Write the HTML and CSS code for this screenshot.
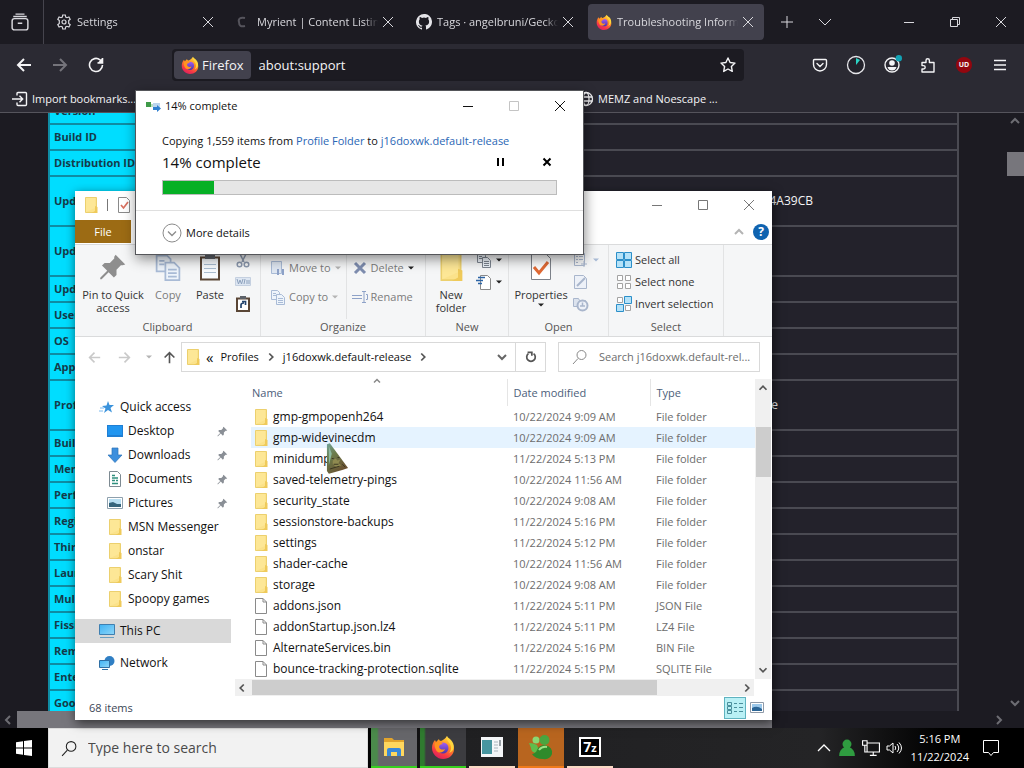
FILE: index.html
```html
<!DOCTYPE html>
<html lang="en">
<head>
    <meta charset="UTF-8">
    <meta name="viewport" content="width=device-width, initial-scale=1.0">
    <title>Troubleshooting Information</title>
    <link rel="stylesheet" href="styles.css">
</head>
<body>
    <!-- shared icons -->
    <svg class="sprite" aria-hidden="true">
        <defs>
            <linearGradient id="foxFire" x1="0.8" y1="0" x2="0.3" y2="1">
                <stop offset="0" stop-color="#ffe24a"/>
                <stop offset="0.4" stop-color="#ff9320"/>
                <stop offset="0.75" stop-color="#f83a45"/>
                <stop offset="1" stop-color="#d8205f"/>
            </linearGradient>
            <linearGradient id="foxGlobe" x1="0" y1="0" x2="0" y2="1">
                <stop offset="0" stop-color="#a05cf5"/>
                <stop offset="1" stop-color="#4b36a8"/>
            </linearGradient>
            <linearGradient id="screenBlue" x1="0" y1="0" x2="1" y2="1">
                <stop offset="0" stop-color="#3fb2f3"/>
                <stop offset="1" stop-color="#8fd6f8"/>
            </linearGradient>
            <linearGradient id="cursorFur" x1="0" y1="0" x2="0.6" y2="1">
                <stop offset="0" stop-color="#6fa39a"/>
                <stop offset="0.4" stop-color="#6b7c4a"/>
                <stop offset="1" stop-color="#6a4f30"/>
            </linearGradient>
        </defs>
        <symbol id="i-folder" viewBox="0 0 16 16">
            <path d="M2.500 .5h11v15h-11z" fill="#fbe28a" stroke="#ecd06e"/>
            <path d="M3 1h9v10l-9 4z" fill="#fde796"/>
            <path d="M12 9l2.500 1v6h-6l3.500-2z" fill="#efca5a"/>
        </symbol>
        <symbol id="i-file" viewBox="0 0 16 16">
            <path d="M2.500 .5h7.500l3.500 3.500v11.500h-11z" fill="#fff" stroke="#8a8a8a"/>
            <path d="M10 .5v3.500h3.500" fill="none" stroke="#8a8a8a"/>
        </symbol>
        <symbol id="i-pin" viewBox="0 0 16 16">
            <path d="M9.500 1l5.500 5.500-1.500 .5-1 0-2.500 2.500v3l-1.500 1.500-3-3-4 4-.8 0 0-.8 4-4-3-3 1.500-1.500h3l2.500-2.500v-1z" fill="currentColor"/>
        </symbol>
        <symbol id="i-x" viewBox="0 0 16 16">
            <path d="M3 3l10 10M13 3l-10 10" fill="none" stroke="currentColor"/>
        </symbol>
        <symbol id="i-min" viewBox="0 0 16 16">
            <path d="M3 8.500h10" fill="none" stroke="currentColor"/>
        </symbol>
        <symbol id="i-max" viewBox="0 0 16 16">
            <path d="M3.500 3.500h9v9h-9z" fill="none" stroke="currentColor"/>
        </symbol>
        <symbol id="i-down" viewBox="0 0 16 16">
            <path d="M4 6l4 4 4-4" fill="none" stroke="currentColor" stroke-width="2"/>
        </symbol>
        <symbol id="i-up" viewBox="0 0 16 16">
            <path d="M4 10l4-4 4 4" fill="none" stroke="currentColor" stroke-width="2"/>
        </symbol>
        <symbol id="i-left" viewBox="0 0 16 16">
            <path d="M10 4l-4 4 4 4" fill="none" stroke="currentColor" stroke-width="2"/>
        </symbol>
        <symbol id="i-right" viewBox="0 0 16 16">
            <path d="M6 4l4 4-4 4" fill="none" stroke="currentColor" stroke-width="2"/>
        </symbol>
        <symbol id="i-caret" viewBox="0 0 8 8">
            <path d="M1 2.500h6l-3 3z" fill="currentColor"/>
        </symbol>
        <symbol id="i-arrow" viewBox="0 0 16 16">
            <path d="M15 8h-13M8 2l-6 6 6 6" fill="none" stroke="currentColor" stroke-width="2"/>
        </symbol>
        <symbol id="i-search" viewBox="0 0 16 16">
            <circle cx="9.500" cy="6" r="4.500" fill="none" stroke="currentColor"/>
            <path d="M6 9.500l-5 5.500" fill="none" stroke="currentColor"/>
        </symbol>
        <symbol id="i-firefox" viewBox="0 0 24 24">
            <path d="M16 1c0 3 2 4 4 6 2 2 3 4 3 7 0 6-5 10-11 10S1 19 1 13c0-3 1-6 3-8l1 2c1-1 2-2 3-3 0 1 1 2 2 2 2-1 4-2 6-5z" fill="url(#foxFire)"/>
            <circle cx="12" cy="13" r="5.500" fill="url(#foxGlobe)"/>
            <path d="M4 8c3-2 6-1 8 1-2 0-4 1-4 3 1 3 4 3 6 2-1 4-7 5-9 1-1-2-2-5-1-7z" fill="#ff9420"/>
            <path d="M16 1c-1 3 1 5 3 8 2 3 1 7-1 9 6-2 6-9 2-13-2-2-3-2-4-4z" fill="#ffd53e"/>
        </symbol>
        <symbol id="i-globe" viewBox="0 0 16 16">
            <circle cx="8" cy="8" r="6.500" fill="none" stroke="currentColor" stroke-width="1.300"/>
            <ellipse cx="8" cy="8" rx="3" ry="6.500" fill="none" stroke="currentColor" stroke-width="1.300"/>
            <path d="M1.500 6h13M1.500 10h13" fill="none" stroke="currentColor" stroke-width="1.300"/>
        </symbol>
        <symbol id="i-checkdoc" viewBox="0 0 16 16">
            <path d="M2.500 .5h8l3 3v12h-11z" fill="#fff" stroke="#8a8a8a"/>
            <path d="M5 8l2.500 3 4.500-6" fill="none" stroke="#d9705f" stroke-width="1.700"/>
        </symbol>
        <symbol id="i-page" viewBox="0 0 16 16">
            <path d="M1.500 1.500h6l2 2v7h-8z" fill="#eef4fb" stroke="currentColor"/>
            <path d="M3 4.500h3M3 6.500h3" stroke="currentColor"/>
            <path d="M6.500 5.500h5l3 3v7h-8z" fill="#eef4fb" stroke="currentColor"/>
            <path d="M8 9.500h5M8 11.500h5M8 13.500h5" stroke="currentColor"/>
        </symbol>
    </svg>

    <div class="desktop">
        <main class="browser">
            <div class="tab-bar">
                <button class="tab-list" aria-label="Recent browsing">
                    <svg viewBox="0 0 16 16" width="18" height="18" fill="none" stroke="currentColor" stroke-width="1.300">
                        <rect x="1" y="5" width="14" height="10" rx="2"/>
                        <path d="M2 3.200h12M4 1h8M6 9.200h4"/>
                    </svg>
                </button>
                <div class="tab">
                    <svg class="ic" viewBox="0 0 16 16" fill="none" stroke="currentColor" stroke-width="1.200">
                        <path d="M6.700 1h2.600l.4 2 1.300 .7 1.900-.7 1.300 2.300-1.500 1.300v2.800l1.500 1.300-1.300 2.300-1.900-.7-1.300 .7-.4 2h-2.600l-.4-2-1.300-.7-1.900 .7-1.300-2.300 1.500-1.300v-2.800l-1.500-1.300 1.300-2.300 1.900 .7 1.300-.7z"/>
                        <circle cx="8" cy="8" r="2"/>
                    </svg>
                    <span class="tab-title">Settings</span>
                    <button class="tab-close" aria-label="Close tab"><svg class="ic"><use href="#i-x"/></svg></button>
                </div>
                <div class="tab">
                    <svg class="ic dim" viewBox="0 0 16 16" fill="none" stroke="currentColor" stroke-width="2">
                        <path d="M9 4c-5-1-7 1-6 4 0 4 2 5 6 4"/>
                    </svg>
                    <span class="tab-title">Myrient | Content Listing</span>
                    <button class="tab-close" aria-label="Close tab"><svg class="ic"><use href="#i-x"/></svg></button>
                </div>
                <div class="tab">
                    <svg class="ic" viewBox="0 0 16 16" fill="#e4e4e8">
                        <path d="M8 0a8 8 0 0 0-2.500 15.600c.4 0 .5-.2 .5-.4v-1.500c-2.200 .5-2.700-1-2.700-1-.4-.9-.9-1.200-.9-1.200-.7-.5 0-.5 0-.5 .8 0 1.200 .8 1.200 .8 .8 1.200 1.900 .9 2.400 .7 0-.5 .3-.9 .5-1.100-1.800-.2-3.600-.9-3.600-4 0-.9 .3-1.600 .8-2.100 0-.3-.4-1.100 .1-2.200 0 0 .7-.2 2.200 .8a7.500 7.500 0 0 1 4 0c1.500-1 2.200-.8 2.200-.8 .5 1.100 .1 1.900 .1 2.200 .5 .5 .8 1.200 .8 2.100 0 3.100-1.900 3.700-3.700 3.900 .3 .3 .6 .8 .6 1.500v2.300c0 .2 .1 .5 .5 .4a8 8 0 0 0-2.500-15.600z"/>
                    </svg>
                    <span class="tab-title">Tags · angelbruni/Gecko</span>
                    <button class="tab-close" aria-label="Close tab"><svg class="ic"><use href="#i-x"/></svg></button>
                </div>
                <div class="tab active">
                    <svg class="ic"><use href="#i-firefox"/></svg>
                    <span class="tab-title">Troubleshooting Information</span>
                    <button class="tab-close" aria-label="Close tab"><svg class="ic"><use href="#i-x"/></svg></button>
                </div>
                <button class="tab-tool" aria-label="New tab">
                    <svg class="ic" viewBox="0 0 16 16" stroke="currentColor"><path d="M8 2v12M2 8h12"/></svg>
                </button>
                <button class="tab-tool" aria-label="List all tabs">
                    <svg class="ic" viewBox="0 0 16 16" fill="none" stroke="currentColor"><path d="M2 5l6 6 6-6"/></svg>
                </button>
                <div class="window-buttons">
                    <button aria-label="Minimize"><svg class="ic"><use href="#i-min"/></svg></button>
                    <button aria-label="Restore">
                        <svg class="ic" viewBox="0 0 16 16" fill="none" stroke="currentColor"><path d="M3.500 5.500h7v7h-7zM5.500 5v-1.500h7v7h-1.500"/></svg>
                    </button>
                    <button aria-label="Close"><svg class="ic"><use href="#i-x"/></svg></button>
                </div>
            </div>

            <div class="nav-bar">
                <button aria-label="Back"><svg class="ic"><use href="#i-arrow"/></svg></button>
                <button class="disabled" aria-label="Forward"><svg class="ic flip"><use href="#i-arrow"/></svg></button>
                <button aria-label="Reload">
                    <svg class="ic" viewBox="0 0 16 16" fill="none" stroke="currentColor" stroke-width="1.600">
                        <path d="M14.500 8a6.500 6.500 0 1 1-2.500-5.200l2.500 2"/><path d="M14.500 1v5h-5" fill="currentColor"/>
                    </svg>
                </button>
                <div class="url-bar">
                    <span class="identity"><svg class="fox"><use href="#i-firefox"/></svg>Firefox</span>
                    <input type="text" aria-label="Address" value="about:support">
                    <button aria-label="Bookmark this page">
                        <svg class="ic" viewBox="0 0 16 16" fill="none" stroke="currentColor" stroke-width="1.400" stroke-linejoin="round">
                            <path d="M8 1l2.100 4.500 4.900 .6-3.600 3.400 .9 4.900-4.300-2.400-4.300 2.400 .9-4.900-3.600-3.400 4.900-.6z"/>
                        </svg>
                    </button>
                </div>
                <button aria-label="Save to Pocket">
                    <svg class="ic" viewBox="0 0 16 16" fill="none" stroke="currentColor" stroke-width="1.400" stroke-linecap="round">
                        <path d="M2.500 2.500h11q1 0 1 1v4a6.500 6.500 0 0 1-13 0v-4q0-1 1-1zM5 6.500l3 3 3-3"/>
                    </svg>
                </button>
                <button aria-label="Session timer">
                    <svg viewBox="0 0 20 20" width="20" height="20">
                        <circle cx="10" cy="10" r="8.500" fill="#23222b" stroke="#e6e6ea" stroke-width="1.300"/>
                        <path d="M10 10v-7l4 2z" fill="#2bd4c5"/>
                    </svg>
                </button>
                <button aria-label="Account">
                    <svg viewBox="0 0 20 20" width="20" height="20">
                        <circle cx="10" cy="10" r="7" fill="none" stroke="#f4f4f6" stroke-width="1.400"/>
                        <circle cx="10" cy="8" r="2.800" fill="#f4f4f6"/>
                        <path d="M5.500 12h9q-1 3.500-4.500 3.500t-4.500-3.500z" fill="#f4f4f6"/>
                        <circle cx="16.800" cy="3.200" r="3.200" fill="#12a3b5"/>
                    </svg>
                </button>
                <button aria-label="Extensions">
                    <svg class="ic" viewBox="0 0 16 16" fill="none" stroke="currentColor" stroke-width="1.400" stroke-linejoin="round">
                        <path d="M2 5.500h4v-2a1.700 1.700 0 0 1 3.400 0v2h4.600v9.500h-12v-3h1.500a1.700 1.700 0 0 0 0-3.400h-1.500z"/>
                    </svg>
                </button>
                <button aria-label="uBlock Origin"><span class="ublock">UD</span></button>
                <button aria-label="Menu">
                    <svg class="ic" viewBox="0 0 16 16" stroke="currentColor" stroke-width="1.500"><path d="M2 3.500h12M2 8h12M2 12.500h12"/></svg>
                </button>
            </div>

            <div class="bookmarks">
                <a href="#" class="import">
                    <svg class="ic" viewBox="0 0 16 16" fill="none" stroke="currentColor" stroke-width="1.400">
                        <path d="M5 4.500v-2q0-1 1-1h7.500q1 0 1 1v11q0 1-1 1h-7.500q-1 0-1-1v-2M0 8h10.500M7.500 4.800l3.200 3.200-3.200 3.200"/>
                    </svg>Import bookmarks...
                </a>
                <a href="#"><svg class="ic"><use href="#i-globe"/></svg>MEMZ and Noescape ...</a>
            </div>

            <div class="viewport">
                <div class="page">
                    <table class="support">
                        <tr><th>Version</th><td></td></tr>
                        <tr><th>Build ID</th><td></td></tr>
                        <tr><th>Distribution ID</th><td></td></tr>
                        <tr class="tall"><th>Update Folder</th><td class="folder-value">C:\ProgramData\Mozilla\updates\308046B0AF4A39CB</td></tr>
                        <tr class="tall"><th>Update History</th><td></td></tr>
                        <tr><th>Update Channel</th><td></td></tr>
                        <tr><th>User Agent</th><td></td></tr>
                        <tr><th>OS</th><td></td></tr>
                        <tr><th>Application Binary</th><td></td></tr>
                        <tr class="tall"><th>Profile Folder</th><td class="profile-value">Profiles\j16doxwk.default-release</td></tr>
                        <tr><th>Build Configuration</th><td></td></tr>
                        <tr><th>Memory Use</th><td></td></tr>
                        <tr><th>Performance</th><td></td></tr>
                        <tr><th>Registered Service Workers</th><td></td></tr>
                        <tr><th>Third-party Modules</th><td></td></tr>
                        <tr><th>Launcher Process</th><td></td></tr>
                        <tr><th>Multiprocess Windows</th><td></td></tr>
                        <tr><th>Fission Windows</th><td></td></tr>
                        <tr><th>Remote Processes</th><td></td></tr>
                        <tr><th>Enterprise Policies</th><td></td></tr>
                        <tr><th>Google Location Service Key</th><td></td></tr>
                    </table>
                </div>
                <div class="page-vscroll">
                    <svg class="ic"><use href="#i-up"/></svg>
                    <div class="thumb"></div>
                    <svg class="ic"><use href="#i-down"/></svg>
                </div>
            </div>
            <div class="page-hscroll">
                <svg class="ic"><use href="#i-left"/></svg>
                <div class="thumb"></div>
                <svg class="ic"><use href="#i-right"/></svg>
            </div>
        </main>

        <footer class="taskbar">
            <button class="start" aria-label="Start">
                <svg viewBox="0 0 16 16" width="16" height="16" fill="#fff"><path d="M0 2.200l7-1v6.300h-7zM8 1.100l8-1.100v7.500h-8zM0 8.500h7v6.300l-7-1zM8 8.500h8v7.500l-8-1.100z"/></svg>
            </button>
            <label class="task-search">
                <svg viewBox="0 0 16 16" width="17" height="17"><use href="#i-search"/></svg>
                <input type="text" aria-label="Search" placeholder="Type here to search">
            </label>
            <div class="apps">
                <button class="app explorer-app" aria-label="File Explorer">
                    <svg viewBox="0 0 24 24" width="24" height="24">
                        <path d="M2 3h8l2 2h10v4h-20z" fill="#e2a42c"/>
                        <path d="M2 7h20v14h-20z" fill="#ffd75e"/>
                        <path d="M5 21v-6q0-2 2-2h10q2 0 2 2v6h-4v-4h-6v4z" fill="#3a88d8"/>
                    </svg>
                </button>
                <button class="app firefox-app" aria-label="Firefox"><svg width="24" height="24"><use href="#i-firefox"/></svg></button>
                <button class="app window-app" aria-label="Application">
                    <svg viewBox="0 0 24 22" width="24" height="22">
                        <rect x="1" y="1" width="22" height="20" fill="#f4f6f8"/>
                        <rect x="2" y="4" width="10" height="14" fill="#4796a0"/>
                        <path d="M14 6h4M14 9h4M14 12h4M14 15h4" stroke="#a9b4bc"/>
                        <path d="M20 4v6" stroke="#3c4852"/>
                    </svg>
                </button>
                <button class="app msn-app" aria-label="Messenger">
                    <svg viewBox="0 0 26 26" width="26" height="26">
                        <circle cx="8" cy="6" r="3.500" fill="#8ad873"/>
                        <path d="M1 9q5 0 8 2l3 8q-9 1-9-5z" fill="#5fbd4c"/>
                        <circle cx="16.500" cy="6" r="5" fill="#4aa53f"/>
                        <path d="M4 20q4-1 5-4 2-5 8-5 8 2 7 9-2 6-9 5-8 0-11-5z" fill="#2f8a2b"/>
                        <path d="M11 16q3-4 8-3" fill="none" stroke="#9be284" stroke-width="2"/>
                    </svg>
                </button>
                <button class="app zip-app" aria-label="7-Zip"><span class="seven-zip">7<small>z</small></span></button>
            </div>
            <div class="tray">
                <svg viewBox="0 0 16 16" width="16" height="16" fill="none" stroke="#fff" stroke-width="1.300"><path d="M2 11l6-6 6 6"/></svg>
                <svg viewBox="0 0 16 16" width="18" height="18" fill="#2f9c40"><circle cx="8" cy="4.500" r="4"/><path d="M6 7h4q5 2 5 8h-14q0-6 5-8z"/></svg>
                <svg viewBox="0 0 16 16" width="18" height="18" fill="none" stroke="#fff"><path d="M4.500 3.500h11v8h-11zM7 14.500h6M10 12v2M.5 1.500h4v4h-4zM2.500 5.500v6h2"/></svg>
                <svg viewBox="0 0 16 16" width="16" height="16" fill="none" stroke="#fff"><path d="M1 6h2.500l3.500-3v10l-3.500-3h-2.500zM9 6q1.500 2 0 4M11 4q3.500 4 0 8M13 2.500q5 5.500 0 11"/></svg>
                <div class="clock"><span>5:16 PM</span><span>11/22/2024</span></div>
                <button class="notify" aria-label="Notifications">
                    <svg viewBox="0 0 18 18" width="18" height="18" fill="none" stroke="#fff"><path d="M1.500 1.500h15v12h-5l-2.500 3-2.500-3h-5z"/></svg>
                </button>
            </div>
        </footer>

        <section class="window explorer">
            <div class="ex-title">
                <svg class="ic"><use href="#i-folder"/></svg>
                <span class="bar"></span>
                <svg class="ic"><use href="#i-checkdoc"/></svg>
                <div class="window-buttons">
                    <button aria-label="Minimize"><svg class="ic"><use href="#i-min"/></svg></button>
                    <button aria-label="Maximize"><svg class="ic"><use href="#i-max"/></svg></button>
                    <button aria-label="Close"><svg class="ic"><use href="#i-x"/></svg></button>
                </div>
            </div>
            <div class="ex-tabs">
                <button class="file-tab">File</button>
                <svg class="ic collapse"><use href="#i-up"/></svg>
                <button class="help" aria-label="Help">?</button>
            </div>

            <div class="ribbon">
                <div class="group clipboard">
                    <div class="tools">
                        <button class="big pin-button"><svg class="big-ic grey"><use href="#i-pin"/></svg>Pin to Quick access</button>
                        <button class="big muted"><svg class="big-ic pale"><use href="#i-page"/></svg>Copy</button>
                        <button class="big">
                            <svg class="big-ic" viewBox="0 0 28 28">
                                <path d="M5 4.500h18v22h-18z" fill="#f7fafd" stroke="#5a4636" stroke-width="2"/>
                                <path d="M9 1h10v5h-10z" fill="#5c6168"/>
                                <path d="M8 11.500h12M8 15.500h12M8 19.500h12" stroke="#a9bccf"/>
                            </svg>Paste
                        </button>
                        <div class="stack">
                            <button aria-label="Cut">
                                <svg class="ic" viewBox="0 0 16 16" fill="none" stroke="#8b98ad" stroke-width="1.500"><path d="M4 0l5 10M12 0l-5 10"/><circle cx="4.500" cy="12.500" r="2.300"/><circle cx="11.500" cy="12.500" r="2.300"/></svg>
                            </button>
                            <button aria-label="Copy path">
                                <svg class="ic" viewBox="0 0 16 16" fill="none" stroke="#8ea2bd"><path d="M.5 3.500h15v8h-15z" fill="#dde6f2" stroke="#c5d0e0"/><path d="M2 5l1.500 5 1.500-4 1.500 4 1.500-5M10 5l-1 5M12 6v4M14 6v4"/></svg>
                            </button>
                            <button aria-label="Paste shortcut">
                                <svg class="ic" viewBox="0 0 16 16"><path d="M2 2.500h12v12.500h-12z" fill="#fff" stroke="#5a4636" stroke-width="2"/><path d="M5 0h6v3h-6z" fill="#5c6168"/><path d="M6 12v-3q0-2 3-2M7 5.500h3.500v3.500" fill="none" stroke="#24456f" stroke-width="1.700"/></svg>
                            </button>
                        </div>
                    </div>
                    <div class="group-name">Clipboard</div>
                </div>
                <div class="group organize">
                    <div class="tools">
                        <div class="stack muted">
                            <button>
                                <svg class="ic pale" viewBox="0 0 16 16"><path d="M1.500 1.500h10v12h-10z" fill="#dfe7f2" stroke="currentColor"/><path d="M7 9v6h2v-6zM12 9v6h2v-6z" fill="#8ea2c8"/></svg>
                                Move to<svg class="caret"><use href="#i-caret"/></svg>
                            </button>
                            <button><svg class="ic pale"><use href="#i-page"/></svg>Copy to<svg class="caret"><use href="#i-caret"/></svg></button>
                        </div>
                        <div class="stack muted divided">
                            <button>
                                <svg class="ic" viewBox="0 0 16 16" stroke="#7e8daf" stroke-width="3"><path d="M3 3l10 10M13 3l-10 10"/></svg>
                                Delete<svg class="caret dark"><use href="#i-caret"/></svg>
                            </button>
                            <button>
                                <svg class="ic" viewBox="0 0 16 16" fill="none" stroke="#8ea2c8"><path d="M0 6.500h10M0 9.500h10M10 2.500h4M10 13.500h4M12 2.500v11M14 5.500h1.500v5h-1.500"/></svg>
                                Rename
                            </button>
                        </div>
                    </div>
                    <div class="group-name">Organize</div>
                </div>
                <div class="group new">
                    <div class="tools">
                        <button class="big"><svg class="big-ic"><use href="#i-folder"/></svg>New folder</button>
                        <div class="stack">
                            <button aria-label="New item"><svg class="ic slate"><use href="#i-page"/></svg><svg class="caret dark"><use href="#i-caret"/></svg></button>
                            <button aria-label="Easy access">
                                <svg class="ic" viewBox="0 0 16 16" fill="none"><path d="M4.500 1.500h7l3 3v11h-10z" fill="#fff" stroke="#8a8a8a"/><path d="M2 3.500h7M0 6.500h7M2 9.500h4" stroke="#2c64a5" stroke-width="1.500"/></svg><svg class="caret dark"><use href="#i-caret"/></svg>
                            </button>
                        </div>
                    </div>
                    <div class="group-name">New</div>
                </div>
                <div class="group open">
                    <div class="tools">
                        <button class="big">
                            <svg class="big-ic" viewBox="0 0 28 28"><path d="M4.500 1.500h15l4 4v21h-19z" fill="#fff" stroke="#7d828a"/><path d="M7 14l5 6 9-11" fill="none" stroke="#e06a35" stroke-width="3"/></svg>
                            Properties<svg class="caret dark"><use href="#i-caret"/></svg>
                        </button>
                        <div class="stack">
                            <button aria-label="Open">
                                <svg class="ic" viewBox="0 0 16 16" fill="none" stroke="#a9b6cc"><path d="M1.500 1.500h10v12h-10zM3 4.500h2M6 4.500h4M3 7.500h2M6 7.500h4M3 10.500h2M8 12h6M11 9v6"/></svg><svg class="caret pale"><use href="#i-caret"/></svg>
                            </button>
                            <button aria-label="Edit">
                                <svg class="ic" viewBox="0 0 16 16" fill="none" stroke="#a9b6cc"><path d="M1.500 1.500h9l3 3v10h-12z" fill="#edf1f8"/><path d="M4 12l8-8" stroke-width="2"/></svg>
                            </button>
                            <button aria-label="History">
                                <svg class="ic" viewBox="0 0 16 16" fill="none" stroke="#a9b6cc"><path d="M.5 2.500h5l1 2h6v6h-12z" fill="#dce3ee"/><circle cx="9.500" cy="9.500" r="5" stroke-width="2" fill="#edf1f8"/><path d="M7 10h5M9.500 6.500v3" stroke-width="1.500"/></svg>
                            </button>
                        </div>
                    </div>
                    <div class="group-name">Open</div>
                </div>
                <div class="group select">
                    <div class="tools">
                        <div class="stack">
                            <button>
                                <svg class="ic" viewBox="0 0 16 16" fill="#b5e2f8" stroke="#2b8fc9"><path d="M.5 .5h7v7h-7zM8.500 .5h7v7h-7zM.5 8.500h7v7h-7zM8.500 8.500h7v7h-7z"/></svg>
                                Select all
                            </button>
                            <button>
                                <svg class="ic" viewBox="0 0 16 16" fill="#fff" stroke="#a3a3a3"><path d="M1.500 1.500h5v5h-5zM9.500 1.500h5v5h-5zM1.500 9.500h5v5h-5zM9.500 9.500h5v5h-5z"/></svg>
                                Select none
                            </button>
                            <button>
                                <svg class="ic" viewBox="0 0 16 16"><path d="M1.500 1.500h5v5h-5zM9.500 9.500h5v5h-5z" fill="#fff" stroke="#a3a3a3"/><path d="M8.500 .5h7v7h-7zM.5 8.500h7v7h-7z" fill="#b5e2f8" stroke="#2b8fc9"/></svg>
                                Invert selection
                            </button>
                        </div>
                    </div>
                    <div class="group-name">Select</div>
                </div>
            </div>

            <div class="address-row">
                <button class="go faint" aria-label="Back"><svg class="arrow"><use href="#i-arrow"/></svg></button>
                <button class="go faint" aria-label="Forward"><svg class="arrow flip"><use href="#i-arrow"/></svg></button>
                <button class="go narrow faint" aria-label="Recent locations"><svg class="caret"><use href="#i-caret"/></svg></button>
                <button class="go narrow" aria-label="Up"><svg class="arrow turn"><use href="#i-arrow"/></svg></button>
                <div class="path">
                    <svg class="ic"><use href="#i-folder"/></svg>
                    <span class="chevrons">«</span>
                    <span>Profiles</span>
                    <svg class="step"><use href="#i-right"/></svg>
                    <span>j16doxwk.default-release</span>
                    <svg class="step"><use href="#i-right"/></svg>
                    <svg class="ic open-list"><use href="#i-down"/></svg>
                    <button class="refresh" aria-label="Refresh">
                        <svg viewBox="0 0 14 14" width="12" height="12" fill="none" stroke="#555" stroke-width="2"><path d="M4 3a5 5 0 1 0 6 0M3 1.500h5v4"/></svg>
                    </button>
                </div>
                <label class="ex-search">
                    <svg class="ic"><use href="#i-search"/></svg>
                    <input type="text" aria-label="Search folder" placeholder="Search j16doxwk.default-rel...">
                </label>
            </div>

            <div class="ex-body">
                <nav class="sidebar">
                    <a href="#" class="top">
                        <svg class="ic" viewBox="0 0 16 16"><path d="M9 2l1.500 4 4.500 0-3.500 3 1.500 4.500-4-2.500-4 3 1.500-4.500-3.500-2.500 4.500-.5z" fill="#3b93dc"/><path d="M1 9h4M0 12h4" stroke="#7dbaf0"/></svg>
                        Quick access
                    </a>
                    <a href="#">
                        <svg class="ic" viewBox="0 0 16 16"><rect y="2" width="16" height="12" fill="#1f7fd4"/><rect x="1" y="3" width="14" height="9" fill="#2196f0"/></svg>
                        Desktop<svg class="pinned"><use href="#i-pin"/></svg>
                    </a>
                    <a href="#">
                        <svg class="ic" viewBox="0 0 16 16"><path d="M5 1h6v7h4l-7 7.500-7-7.500h4z" fill="#3d8fdd" stroke="#2b72b8" stroke-width=".7"/></svg>
                        Downloads<svg class="pinned"><use href="#i-pin"/></svg>
                    </a>
                    <a href="#">
                        <svg class="ic" viewBox="0 0 16 16"><path d="M2.500 .5h8l3 3v12h-11z" fill="#fff" stroke="#7d8a92"/><path d="M5 4.500h3M5 7h6M5 9.500h3M9 9.500h2M5 12.500h6" stroke="#2f8f7e" stroke-width="1.500"/></svg>
                        Documents<svg class="pinned"><use href="#i-pin"/></svg>
                    </a>
                    <a href="#">
                        <svg class="ic" viewBox="0 0 16 16"><path d="M.5 2.500h15v11h-15z" fill="#fff" stroke="#8ea0ad"/><path d="M2 4h12v8h-12z" fill="#b9dff2"/><path d="M2 8l4-1 4 2 4 0v3h-12z" fill="#37657c"/></svg>
                        Pictures<svg class="pinned"><use href="#i-pin"/></svg>
                    </a>
                    <a href="#"><svg class="ic"><use href="#i-folder"/></svg>MSN Messenger</a>
                    <a href="#"><svg class="ic"><use href="#i-folder"/></svg>onstar</a>
                    <a href="#"><svg class="ic"><use href="#i-folder"/></svg>Scary Shit</a>
                    <a href="#"><svg class="ic"><use href="#i-folder"/></svg>Spoopy games</a>
                    <a href="#" class="top spaced current">
                        <svg class="ic" viewBox="0 0 16 16"><path d="M.5 1.500h15v10h-15z" fill="url(#screenBlue)" stroke="#3f7fb0"/><path d="M1 14.500h14" stroke="#6c9fc0"/></svg>
                        This PC
                    </a>
                    <a href="#" class="top spaced">
                        <svg class="ic" viewBox="0 0 16 16"><circle cx="10.500" cy="6" r="5" fill="#2f7fc4"/><path d="M.5 5.500h10v7h-10z" fill="url(#screenBlue)" stroke="#2f6fa4"/><path d="M3 14.500h6" stroke="#2f6fa4"/></svg>
                        Network
                    </a>
                </nav>

                <div class="files">
                    <div class="files-row">
                        <table class="file-list">
                            <thead>
                                <tr>
                                    <th class="col-name">Name<svg class="sort"><use href="#i-up"/></svg></th>
                                    <th class="col-date">Date modified</th>
                                    <th class="col-type">Type</th>
                                </tr>
                            </thead>
                            <tbody>
                                <tr><td><svg class="ic"><use href="#i-folder"/></svg>gmp-gmpopenh264</td><td>10/22/2024 9:09 AM</td><td>File folder</td></tr>
                                <tr class="hovered"><td><svg class="ic"><use href="#i-folder"/></svg>gmp-widevinecdm</td><td>10/22/2024 9:09 AM</td><td>File folder</td></tr>
                                <tr><td><svg class="ic"><use href="#i-folder"/></svg>minidumps</td><td>11/22/2024 5:13 PM</td><td>File folder</td></tr>
                                <tr><td><svg class="ic"><use href="#i-folder"/></svg>saved-telemetry-pings</td><td>10/22/2024 11:56 AM</td><td>File folder</td></tr>
                                <tr><td><svg class="ic"><use href="#i-folder"/></svg>security_state</td><td>10/22/2024 9:08 AM</td><td>File folder</td></tr>
                                <tr><td><svg class="ic"><use href="#i-folder"/></svg>sessionstore-backups</td><td>11/22/2024 5:16 PM</td><td>File folder</td></tr>
                                <tr><td><svg class="ic"><use href="#i-folder"/></svg>settings</td><td>11/22/2024 5:12 PM</td><td>File folder</td></tr>
                                <tr><td><svg class="ic"><use href="#i-folder"/></svg>shader-cache</td><td>10/22/2024 11:56 AM</td><td>File folder</td></tr>
                                <tr><td><svg class="ic"><use href="#i-folder"/></svg>storage</td><td>10/22/2024 9:08 AM</td><td>File folder</td></tr>
                                <tr><td><svg class="ic"><use href="#i-file"/></svg>addons.json</td><td>11/22/2024 5:11 PM</td><td>JSON File</td></tr>
                                <tr><td><svg class="ic"><use href="#i-file"/></svg>addonStartup.json.lz4</td><td>11/22/2024 5:11 PM</td><td>LZ4 File</td></tr>
                                <tr><td><svg class="ic"><use href="#i-file"/></svg>AlternateServices.bin</td><td>11/22/2024 5:16 PM</td><td>BIN File</td></tr>
                                <tr><td><svg class="ic"><use href="#i-file"/></svg>bounce-tracking-protection.sqlite</td><td>11/22/2024 5:15 PM</td><td>SQLITE File</td></tr>
                            </tbody>
                        </table>
                        <div class="vscroll">
                            <svg class="step"><use href="#i-up"/></svg>
                            <div class="thumb"></div>
                            <svg class="step"><use href="#i-down"/></svg>
                        </div>
                    </div>
                    <div class="hscroll">
                        <svg class="step"><use href="#i-left"/></svg>
                        <div class="track"><div class="thumb"></div></div>
                        <svg class="step"><use href="#i-right"/></svg>
                    </div>
                </div>
            </div>

            <div class="status">
                <span>68 items</span>
                <button class="view chosen" aria-label="Details view">
                    <svg class="ic" viewBox="0 0 16 16" fill="none" stroke="#4a8f9c"><path d="M.5 2.500h4v3h-4zM.5 6.500h4v3h-4zM.5 10.500h4v3h-4zM7 3.500h3M7 7.500h3M7 11.500h3M12 3.500h4M12 7.500h4M12 11.500h4"/></svg>
                </button>
                <button class="view" aria-label="Thumbnail view">
                    <svg class="ic" viewBox="0 0 16 16"><path d="M1.500 2.500h13v10h-13z" fill="#fff" stroke="#8f9aa8"/><path d="M3 4h10v7h-10z" fill="#9cc8ea"/><path d="M3 8q5-3 10 1v2h-10z" fill="#2b6596"/></svg>
                </button>
            </div>
        </section>

        <section class="window copy-dialog">
            <div class="copy-title">
                <svg class="ic" viewBox="0 0 16 16"><path d="M1 4h5v5h-5z" fill="#3f9a48"/><path d="M6 6h3v3h-3z" fill="#b9dcc0"/><path d="M8 5h7v6h-7z" fill="#bcd5ee"/><path d="M8 9h4v-2l4 3.500-4 3.500v-2h-4z" fill="#2f7fd0"/></svg>
                <span>14% complete</span>
                <div class="window-buttons">
                    <button aria-label="Minimize"><svg class="ic"><use href="#i-min"/></svg></button>
                    <button class="disabled" aria-label="Maximize"><svg class="ic"><use href="#i-max"/></svg></button>
                    <button aria-label="Close"><svg class="ic"><use href="#i-x"/></svg></button>
                </div>
            </div>
            <div class="copy-body">
                <div class="copy-from">Copying 1,559 items from <a href="#">Profile Folder</a> to <a href="#">j16doxwk.default-release</a></div>
                <div class="copy-status">
                    <label for="copyProgress">14% complete</label>
                    <button aria-label="Pause"><svg viewBox="0 0 10 10" width="10" height="10"><path d="M1 1h2v8h-2zM6 1h2v8h-2z"/></svg></button>
                    <button aria-label="Cancel"><svg viewBox="0 0 10 10" width="10" height="10" stroke="#000" stroke-width="2"><path d="M1.500 1.500l7 7M8.500 1.500l-7 7"/></svg></button>
                </div>
                <progress id="copyProgress" value="13" max="100"></progress>
            </div>
            <div class="copy-more">
                <button>
                    <svg viewBox="0 0 20 20" width="20" height="20" fill="none" stroke="#8b8b8b"><circle cx="10" cy="10" r="9"/><path d="M6 8.500l4 4 4-4" stroke-width="1.300"/></svg>
                    More details
                </button>
            </div>
        </section>

        <svg class="cursor" viewBox="0 0 24 32">
            <path d="M1 1l3-1 19 26-6 2-14 4-2-3z" fill="url(#cursorFur)"/>
            <path d="M3 3l3 8-3 12z" fill="#8db9a2"/>
            <path d="M7 18l3-2 2 2 3-1-2 4 3 2-5 2-4-3z" fill="#8f8a50"/>
            <path d="M6 16h2M12 15h2M8 22h5M4 27l10-3M17 22l3 3" stroke="#3a3521"/>
        </svg>
    </div>
</body>
</html>
```
FILE: styles.css
```css
:root {
    --ff-dark: #1c1b22;
    --ff-bar: #2b2a33;
    --ff-text: #f4f4f6;
    --cyan: #00ddff;
    --ribbon: #f5f6f7;
}

* {
    box-sizing: border-box;
}

body {
    margin: 0;
    background: #000;
    font-family: "Open Sans", "Noto Sans", sans-serif;
    font-size: 11px;
    line-height: 16px;
    color: #111;
}

button {
    display: flex;
    align-items: center;
    justify-content: center;
    padding: 0;
    border: 0;
    background: none;
    color: inherit;
    font: inherit;
}

input {
    flex: 1;
    min-width: 0;
    padding: 0;
    border: 0;
    outline: none;
    background: none;
    color: inherit;
    font: inherit;
}

a {
    color: inherit;
    text-decoration: none;
}

table {
    border-collapse: collapse;
}

svg {
    flex: none;
}

.sprite {
    position: absolute;
    width: 0;
    height: 0;
}

.ic {
    width: 16px;
    height: 16px;
}

.step {
    width: 14px;
    height: 14px;
    color: #555;
}

.caret {
    width: 8px;
    height: 8px;
    color: #b4b4b4;
}

.caret.dark {
    color: #222;
}

.flip {
    transform: scaleX(-1);
}

.turn {
    transform: rotate(90deg);
}

.desktop {
    position: relative;
    display: flex;
    flex-direction: column;
    height: 100vh;
    overflow: hidden;
}

.window-buttons {
    display: flex;
    margin-left: auto;
    align-self: stretch;
}

.window-buttons button {
    width: 46px;
}

/* browser */
.browser {
    flex: 1;
    min-height: 0;
    display: flex;
    flex-direction: column;
    background: var(--ff-dark);
    color: var(--ff-text);
}

.tab-bar {
    display: flex;
    align-items: center;
    height: 44px;
    font-size: 12px;
    color: #d8d8dd;
}

.tab-list {
    width: 44px;
    height: 44px;
    padding-right: 4px;
    margin-right: 4px;
    border-right: 1px solid #45444d;
}

.tab {
    display: flex;
    align-items: center;
    gap: 5px;
    width: 176px;
    height: 36px;
    margin-right: 4px;
    padding: 0 8px;
    border-radius: 4px;
}

.tab.active {
    background: #42414d;
}

.tab-title {
    flex: 1;
    overflow: hidden;
    font-size: 11px;
    white-space: nowrap;
    mask-image: linear-gradient(to left, transparent, #000 14px);
}

.tab-close {
    margin-left: -3px;
}

.dim {
    color: #55545c;
}

.tab-tool {
    width: 38px;
    height: 36px;
}

.nav-bar {
    display: flex;
    align-items: center;
    height: 42px;
    padding: 0 6px;
    background: var(--ff-bar);
}

.nav-bar > button {
    width: 36px;
    height: 32px;
}

.nav-bar .disabled {
    color: #75747b;
}

.url-bar {
    flex: 1;
    display: flex;
    align-items: center;
    height: 32px;
    margin: 0 58px;
    border-radius: 4px;
    background: var(--ff-dark);
    font-size: 13px;
}

.url-bar > button {
    width: 32px;
}

.identity {
    display: flex;
    align-items: center;
    gap: 3px;
    height: 28px;
    margin: 0 8px 0 2px;
    padding: 0 7px;
    border-radius: 4px;
    background: #42414d;
}

.fox {
    width: 18px;
    height: 18px;
}

.ublock {
    width: 16px;
    height: 16px;
    border-radius: 8px;
    background: #93060f;
    font-size: 7px;
    font-weight: bold;
}

.bookmarks {
    display: flex;
    height: 27px;
    padding: 0 12px;
    border-bottom: 1px solid #55545c;
    background: var(--ff-bar);
}

.bookmarks a {
    display: flex;
    align-items: center;
    gap: 4px;
}

.import {
    width: 566px;
}

.viewport {
    flex: 1;
    min-height: 0;
    display: flex;
}

.page {
    flex: 1;
    overflow: hidden;
    padding: 0 48px;
}

.support {
    width: 100%;
    margin-top: -16px;
    background: #23222b;
}

.support th,
.support td {
    height: 26px;
    padding: 0 4px;
    border: 2px solid #4a4a52;
    text-align: left;
    white-space: nowrap;
}

.support th {
    width: 235px;
    background: var(--cyan);
    border-color: #0f8ca3;
    color: #153b4a;
}

.support .tall th,
.support .tall td {
    height: 50px;
}

.support td {
    text-align: right;
}

.support .folder-value {
    padding-right: 144px;
    font-size: 12px;
}

.support .profile-value {
    padding-right: 179px;
    font-size: 12px;
}

.page-vscroll {
    display: flex;
    flex-direction: column;
    width: 17px;
    color: #6d6d73;
}

.page-vscroll .thumb {
    height: 24px;
    margin: 23px 0 auto;
    background: #77767c;
}

.page-hscroll {
    display: flex;
    align-items: center;
    height: 17px;
    padding-right: 17px;
    color: #6d6d73;
}

.page-hscroll .thumb {
    width: 75%;
    height: 17px;
    margin: 0 auto 0 1px;
    background: #77767c;
}

/* taskbar */
.taskbar {
    display: flex;
    height: 40px;
    background: linear-gradient(to right, #000 35%, #202022 45%, #242426 80%, #000 92%);
    color: #fff;
}

.start {
    width: 48px;
}

.task-search {
    display: flex;
    align-items: center;
    gap: 10px;
    width: 320px;
    padding: 0 12px;
    background: #f2f2f2;
    border: 1px solid #dcdcdc;
    color: #222;
    font-size: 14px;
}

.task-search input::placeholder {
    color: #4a4a4a;
}

.apps {
    display: flex;
    gap: 3px;
    margin-left: 3px;
}

.app {
    width: 46px;
    border-bottom: 2px solid #f9d9c4;
}

.explorer-app {
    background: linear-gradient(to right, #4b8a4b 6px, #66666a 8px);
    border-color: #37d21f;
}

.firefox-app {
    background: linear-gradient(to right, #2f7a2f 4px, #3c3c40 6px);
    border-color: #37d21f;
}

.msn-app {
    background: #b8651f;
    border-color: #f07a1a;
}

.seven-zip {
    width: 22px;
    height: 20px;
    border: 2px solid #fff;
    background: #000;
    font-size: 14px;
    font-weight: bold;
}

.seven-zip small {
    font-size: 11px;
}

.tray {
    display: flex;
    align-items: center;
    gap: 6px;
    margin-left: auto;
}

.clock {
    display: flex;
    flex-direction: column;
    align-items: center;
    margin-left: 3px;
    line-height: 18px;
}

.notify {
    width: 32px;
    margin-right: 17px;
}

/* floating windows */
.window {
    position: absolute;
    display: flex;
    flex-direction: column;
    background: #fff;
}

.explorer {
    left: 75px;
    top: 191px;
    width: 697px;
    box-shadow: 1px 3px 10px rgba(0, 0, 0, 0.6);
}

.ex-title {
    display: flex;
    align-items: center;
    gap: 8px;
    height: 28px;
    padding-left: 8px;
}

.ex-title .window-buttons {
    color: #777;
}

.bar {
    width: 1px;
    height: 12px;
    background: #777;
}

.ex-tabs {
    display: flex;
    align-items: center;
    height: 26px;
    padding-right: 3px;
    border-bottom: 1px solid #dadbdc;
}

.file-tab {
    width: 56px;
    height: 23px;
    background: #9c6b14;
    color: #fff;
}

.collapse {
    margin: 0 6px 0 auto;
    color: #b4b4b4;
}

.help {
    width: 16px;
    height: 16px;
    border-radius: 8px;
    background: #0f63b0;
    color: #fff;
    font-size: 12px;
    font-weight: bold;
}

.ribbon {
    display: flex;
    height: 92px;
    border-bottom: 1px solid #dadbdc;
    background: var(--ribbon);
    color: #333;
}

.group {
    display: flex;
    flex-direction: column;
    border-right: 1px solid #e2e3e4;
}

.clipboard {
    width: 186px;
}

.organize {
    width: 165px;
}

.new {
    width: 83px;
}

.open {
    width: 100px;
}

.select {
    width: 115px;
}

.tools {
    flex: 1;
    display: flex;
    padding: 4px 4px 0;
}

.group-name {
    height: 17px;
    text-align: center;
    color: #555;
}

.big {
    flex-direction: column;
    justify-content: flex-start;
    width: 42px;
    line-height: 13px;
}

.pin-button {
    width: 68px;
}

.open .big {
    width: 56px;
}

.big-ic {
    width: 28px;
    height: 28px;
    margin: 4px 0 7px;
}

.grey {
    color: #8e8e8e;
}

.pale {
    color: #a9bbd6;
}

.slate {
    color: #7d8590;
}

.muted {
    color: #7b7b7b;
}

.stack {
    display: flex;
    flex-direction: column;
}

.stack button {
    gap: 3px;
    height: 22px;
    justify-content: flex-start;
    white-space: nowrap;
}

.clipboard .stack,
.new .stack,
.open .stack {
    margin-left: 4px;
}

.organize .stack {
    padding: 8px 0 0 5px;
    gap: 7px;
}

.organize .divided {
    margin-left: 4px;
    border-left: 1px solid #e2e3e4;
}

.select .tools {
    padding-left: 7px;
}

.address-row {
    display: flex;
    align-items: center;
    height: 42px;
    padding: 0 12px 2px 8px;
}

.go {
    width: 30px;
    height: 24px;
    color: #555;
}

.go:first-child {
    width: 22px;
    margin-right: 4px;
}

.narrow {
    width: 20px;
}

.faint {
    color: #c9c9c9;
}

.arrow {
    width: 13px;
    height: 13px;
}

.path,
.ex-search {
    display: flex;
    align-items: center;
    height: 30px;
    border: 1px solid #d9d9d9;
}

.path {
    flex: 1;
    gap: 5px;
    margin: 0 12px 0 2px;
    padding-left: 3px;
}

.chevrons {
    font-size: 15px;
    margin-right: 2px;
}

.open-list {
    margin-left: auto;
    color: #666;
}

.refresh {
    width: 30px;
    height: 28px;
    border-left: 1px solid #d9d9d9;
}

.ex-search {
    gap: 11px;
    width: 202px;
    padding: 0 4px 0 13px;
    color: #888;
}

.ex-search input::placeholder {
    color: #6d6d6d;
}

.ex-body {
    display: flex;
}

.sidebar {
    width: 160px;
    padding: 16px 4px 0 0;
    font-size: 12px;
}

.sidebar a {
    display: flex;
    align-items: center;
    gap: 5px;
    height: 24px;
    padding-left: 32px;
}

.sidebar .top {
    padding-left: 24px;
}

.sidebar .spaced {
    margin-top: 8px;
}

.sidebar .current {
    background: #d9d9d9;
}

.pinned {
    width: 11px;
    height: 11px;
    margin: 0 3px 0 auto;
    color: #8a8f96;
}

.files {
    flex: 1;
    min-width: 0;
}

.files-row {
    display: flex;
}

.file-list {
    flex: 1;
    margin-left: 16px;
    table-layout: fixed;
}

.file-list th {
    position: relative;
    height: 27px;
    padding: 0 0 0 6px;
    border-right: 1px solid #e5e5e5;
    font-weight: normal;
    text-align: left;
    color: #4c607a;
}

.file-list .col-name {
    width: 256px;
    padding-left: 1px;
}

.col-date {
    width: 143px;
}

.file-list .col-type {
    border-right: 0;
}

.sort {
    position: absolute;
    top: -4px;
    left: 120px;
    width: 12px;
    height: 12px;
    color: #888;
}

.file-list td {
    height: 21px;
    padding: 0 0 0 6px;
    color: #6d6d6d;
    white-space: nowrap;
}

.file-list td:first-child {
    padding-left: 2px;
    font-size: 12px;
    color: #111;
}

.file-list .ic {
    margin-right: 4px;
    vertical-align: top;
}

.hovered {
    background: #e5f3ff;
}

.vscroll {
    display: flex;
    flex-direction: column;
    align-items: center;
    width: 16px;
    margin-right: 1px;
    padding: 2px 0;
    background: #f0f0f0;
}

.vscroll .thumb {
    width: 15px;
    height: 50px;
    margin: 32px 0 auto;
    background: #cdcdcd;
}

.hscroll {
    display: flex;
    align-items: center;
    height: 17px;
    margin-right: 18px;
    background: #f0f0f0;
}

.track {
    flex: 1;
    margin-left: 3px;
}

.hscroll .thumb {
    width: 83%;
    height: 15px;
    background: #cdcdcd;
}

.status {
    display: flex;
    align-items: center;
    height: 24px;
    padding: 0 4px 0 14px;
    color: #3b4656;
}

.view {
    width: 22px;
    height: 22px;
}

.chosen {
    margin-left: auto;
    border: 1px solid #5fb3c0;
    background: #b9f0f5;
}

.copy-dialog {
    left: 135px;
    top: 90px;
    width: 449px;
    border: 1px solid #55565a;
    box-shadow: 1px 4px 12px rgba(0, 0, 0, 0.45);
}

.copy-title {
    display: flex;
    align-items: center;
    gap: 4px;
    height: 30px;
    padding-left: 9px;
}

.copy-title .disabled {
    color: #c4c4c4;
}

.copy-body {
    padding: 12px 26px 15px;
}

.copy-body a {
    color: #2a66b5;
}

.copy-status {
    display: flex;
    align-items: center;
    height: 26px;
    margin-bottom: 5px;
    font-size: 15px;
}

.copy-status label {
    flex: 1;
}

.copy-status button {
    width: 20px;
    margin-left: 26px;
}

.copy-body progress {
    display: block;
    width: 100%;
    height: 15px;
    border: 1px solid #bcbcbc;
    background: #e6e6e6;
    appearance: none;
}

progress::-webkit-progress-bar {
    background: #e6e6e6;
}

progress::-webkit-progress-value {
    background: #06b025;
}

.copy-more {
    padding: 12px 26px 11px;
    border-top: 1px solid #dfdfdf;
}

.copy-more button {
    gap: 4px;
}

.cursor {
    position: absolute;
    left: 326px;
    top: 442px;
    width: 23px;
    height: 33px;
}
```
